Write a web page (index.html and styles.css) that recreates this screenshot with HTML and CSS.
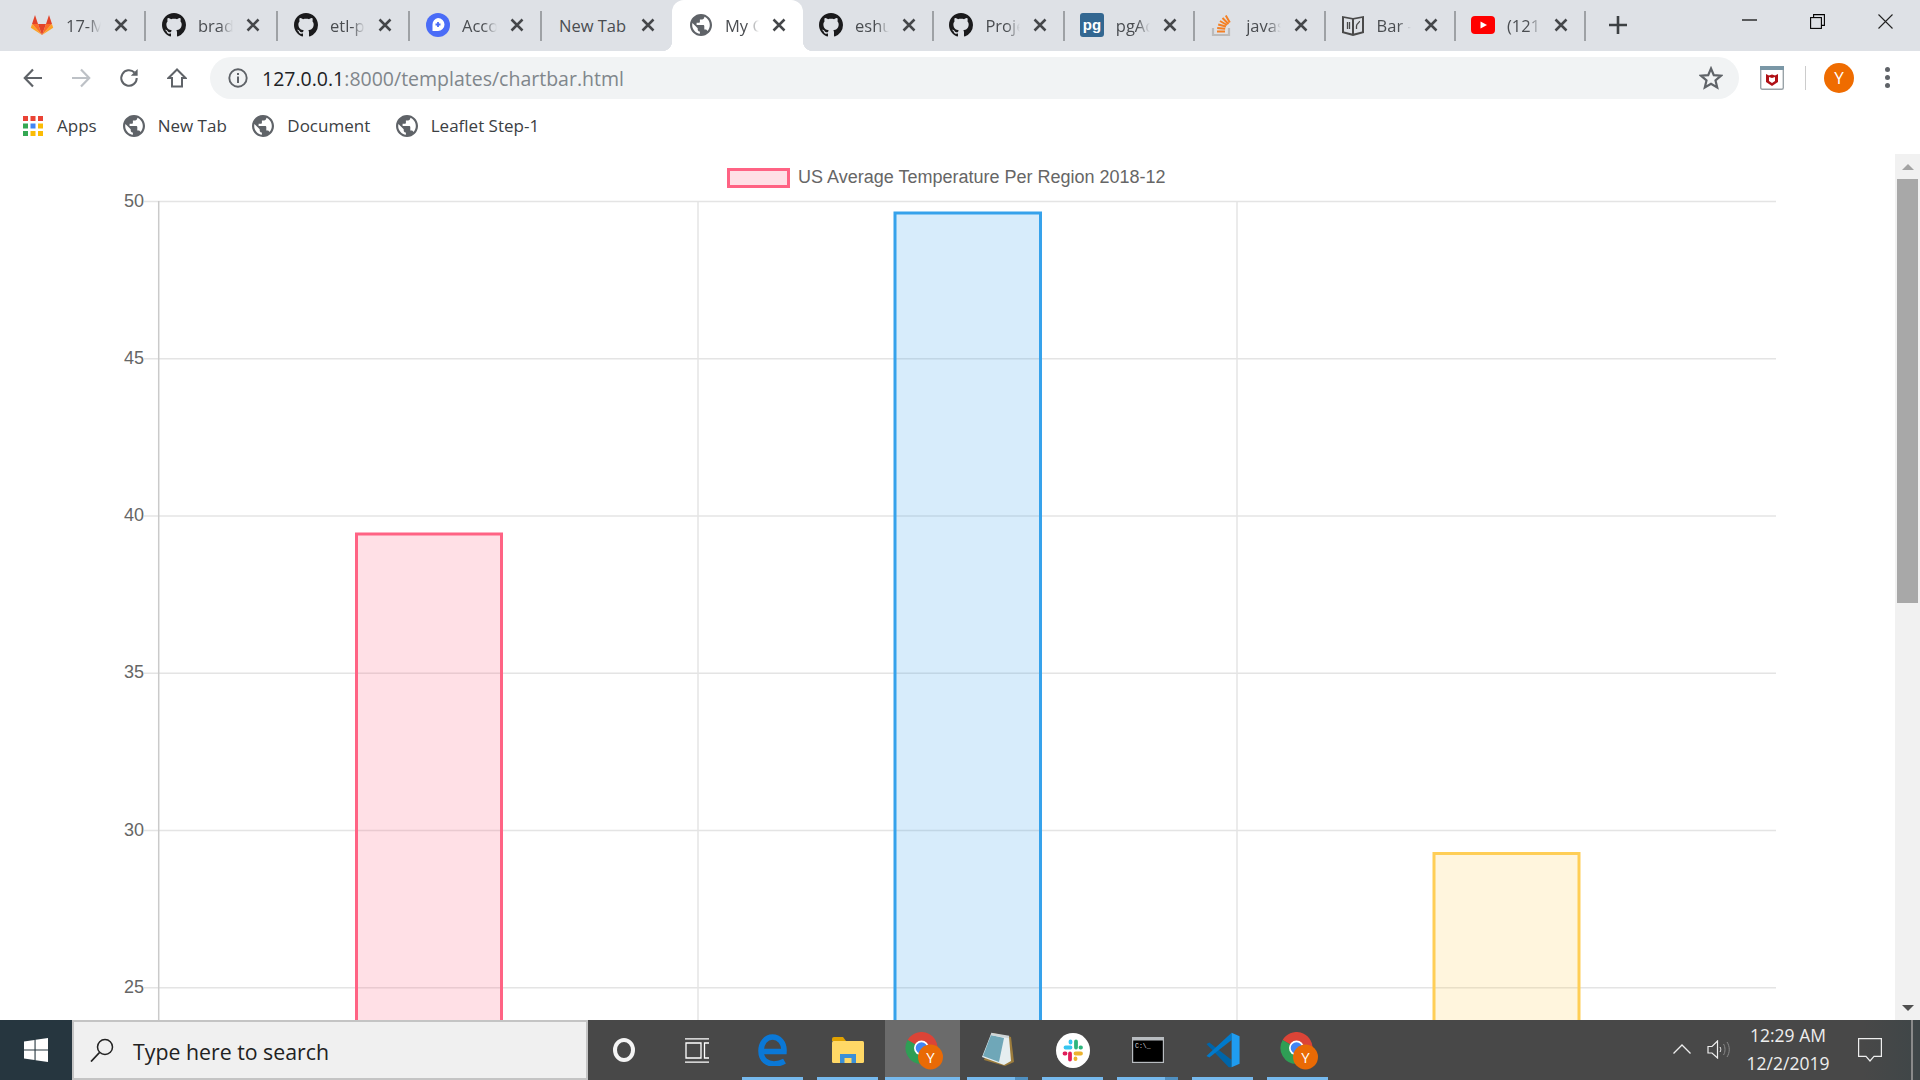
FILE: index.html
```html
<!DOCTYPE html>
<html lang="en">
<head>
    <meta charset="UTF-8">
    <meta name="viewport" content="width=device-width, initial-scale=1.0">
    <title>My Chart</title>
    <link rel="stylesheet" href="styles.css">
</head>
<body>
    <!-- shared icons -->
    <svg class="sprite" xmlns="http://www.w3.org/2000/svg">
        <symbol id="i-globe" viewBox="2 2 20 20">
            <path d="M12 2C6.48 2 2 6.48 2 12s4.48 10 10 10 10-4.48 10-10S17.52 2 12 2zm-1 17.93c-3.95-.49-7-3.85-7-7.93 0-.62.08-1.21.21-1.79L9 15v1c0 1.1.9 2 2 2v1.93zm6.9-2.54c-.26-.81-1-1.39-1.9-1.39h-1v-3c0-.55-.45-1-1-1H8v-2h2c.55 0 1-.45 1-1V7h2c1.1 0 2-.9 2-2v-.41c2.93 1.19 5 4.06 5 7.41 0 2.08-.8 3.97-2.1 5.39z" fill="#5f6368"/>
        </symbol>
        <symbol id="i-github" viewBox="0 0 16 16">
            <path d="M8 0C3.58 0 0 3.58 0 8c0 3.54 2.29 6.53 5.47 7.59.4.07.55-.17.55-.38 0-.19-.01-.82-.01-1.49-2.01.37-2.53-.49-2.69-.94-.09-.23-.48-.94-.82-1.13-.28-.15-.68-.52-.01-.53.63-.01 1.08.58 1.23.82.72 1.21 1.87.87 2.33.66.07-.52.28-.87.51-1.07-1.78-.2-3.64-.89-3.64-3.95 0-.87.31-1.59.82-2.15-.08-.2-.36-1.02.08-2.12 0 0 .67-.21 2.2.82.64-.18 1.32-.27 2-.27.68 0 1.36.09 2 .27 1.53-1.04 2.2-.82 2.2-.82.44 1.1.16 1.92.08 2.12.51.56.82 1.27.82 2.15 0 3.07-1.87 3.75-3.65 3.95.29.25.54.73.54 1.48 0 1.07-.01 1.93-.01 2.2 0 .21.15.46.55.38A8.013 8.013 0 0016 8c0-4.42-3.58-8-8-8z" fill="#1a1a1c"/>
        </symbol>
        <symbol id="i-close" viewBox="0 0 14 14">
            <path d="M1.5 1.5l11 11M12.500 1.500l-11 11" stroke="#45474a" stroke-width="2.500" fill="none"/>
        </symbol>
        <symbol id="i-chrome" viewBox="0 0 38 38">
            <path d="M16.500 16L2.640 8A16 16 0 0 1 32.500 16Z" fill="#db4437"/>
            <path d="M16.500 16H32.500A16 16 0 0 1 16.500 32Z" fill="#f4c20d"/>
            <path d="M16.500 16V32A16 16 0 0 1 2.640 8Z" fill="#2f9e55"/>
            <circle cx="16.500" cy="16" r="7.500" fill="#fff"/>
            <circle cx="16.500" cy="16" r="5.800" fill="#4285f4"/>
            <circle cx="25.500" cy="25" r="12.500" fill="#e96a05"/>
            <text x="25.500" y="30.500" class="badge-letter">Y</text>
        </symbol>
    </svg>

    <div class="window">
        <div class="tabstrip">
            <div class="tabs">
                <div class="tab tab-wide">
                    <svg class="favicon" viewBox="0 0 24 24"><polygon points="12,22 8,11 2,11" fill="#fc6d26"/><polygon points="12,22 16,11 22,11" fill="#fc6d26"/><polygon points="8,11 5,2 2,11" fill="#e24329"/><polygon points="16,11 19,2 22,11" fill="#e24329"/><polygon points="2,11 .8,14.800 12,22" fill="#fca326"/><polygon points="22,11 23.200,14.800 12,22" fill="#fca326"/><polygon points="12,22 8,11 16,11" fill="#e24329"/></svg>
                    <span class="tab-title">17-M</span>
                    <svg class="tab-close"><use href="#i-close"/></svg>
                </div>
                <div class="tab tab-wide">
                    <svg class="favicon"><use href="#i-github"/></svg>
                    <span class="tab-title">brad</span>
                    <svg class="tab-close"><use href="#i-close"/></svg>
                </div>
                <div class="tab tab-wide">
                    <svg class="favicon"><use href="#i-github"/></svg>
                    <span class="tab-title">etl-p</span>
                    <svg class="tab-close"><use href="#i-close"/></svg>
                </div>
                <div class="tab tab-wide">
                    <svg class="favicon" viewBox="0 0 24 24"><circle cx="12" cy="12" r="12" fill="#4a6cf7"/><path d="M12 5a6.500 6.500 0 0 1 0 13H6.500v-6.500A6.500 6.500 0 0 1 12 5z" fill="#fff"/><path d="M12 9v5M9.500 11.500h5" stroke="#4a6cf7" stroke-width="1.800"/></svg>
                    <span class="tab-title">Acco</span>
                    <svg class="tab-close"><use href="#i-close"/></svg>
                </div>
                <div class="tab tab-plain no-sep">
                    <span class="tab-title">New Tab</span>
                    <svg class="tab-close"><use href="#i-close"/></svg>
                </div>
                <div class="tab tab-active no-sep">
                    <svg class="favicon"><use href="#i-globe"/></svg>
                    <span class="tab-title">My C</span>
                    <svg class="tab-close"><use href="#i-close"/></svg>
                </div>
                <div class="tab">
                    <svg class="favicon"><use href="#i-github"/></svg>
                    <span class="tab-title">eshu</span>
                    <svg class="tab-close"><use href="#i-close"/></svg>
                </div>
                <div class="tab">
                    <svg class="favicon"><use href="#i-github"/></svg>
                    <span class="tab-title">Proje</span>
                    <svg class="tab-close"><use href="#i-close"/></svg>
                </div>
                <div class="tab">
                    <svg class="favicon" viewBox="0 0 24 24"><rect width="24" height="24" rx="3" fill="#336791"/><text x="12" y="16.500" class="pg-letters">pg</text></svg>
                    <span class="tab-title">pgAd</span>
                    <svg class="tab-close"><use href="#i-close"/></svg>
                </div>
                <div class="tab">
                    <svg class="favicon" viewBox="0 0 24 24"><path d="M3 15v7h16v-7" fill="none" stroke="#bcbbbb" stroke-width="2.200"/><path d="M7 18.500h8M7.200 15l8 .8M8.200 11.500l7.800 2M10 8l7 4M12.500 5l6 6M15.800 2.500l4 7" stroke="#f48024" stroke-width="2" fill="none"/></svg>
                    <span class="tab-title">javas</span>
                    <svg class="tab-close"><use href="#i-close"/></svg>
                </div>
                <div class="tab">
                    <svg class="favicon" viewBox="0 0 24 24"><path d="M1 3l11 2 11-2v17l-11 3-11-3z" fill="#4a4a4a"/><path d="M3 5l8 1.500v14L3 18.500zM21 5l-8 1.500v14l8-2z" fill="#dee1e6"/><path d="M6.500 9v7M8.500 9v7M15.500 16v-3c0-3 3.500-3 3-5" stroke="#4a4a4a" stroke-width="1.300" fill="none"/></svg>
                    <span class="tab-title">Bar -</span>
                    <svg class="tab-close"><use href="#i-close"/></svg>
                </div>
                <div class="tab">
                    <svg class="favicon" viewBox="0 0 24 24"><rect y="3" width="24" height="18" rx="4" fill="#f00"/><polygon points="9.500,8.500 16,12 9.500,15.500" fill="#fff"/></svg>
                    <span class="tab-title">(121</span>
                    <svg class="tab-close"><use href="#i-close"/></svg>
                </div>
            </div>
            <svg class="new-tab" viewBox="0 0 18 18"><path d="M9 0v18M0 9h18" stroke="#3c4043" stroke-width="2.600"/></svg>
            <div class="win-controls">
                <div class="win-btn"><svg class="win-icon win-min" viewBox="0 0 15 15"><path d="M0 1h15" stroke="#000" stroke-width="1.200"/></svg></div>
                <div class="win-btn"><svg class="win-icon" viewBox="0 0 15 15"><rect x=".6" y="3.600" width="10.800" height="10.800" fill="none" stroke="#000" stroke-width="1.100"/><path d="M3.600 3.600V.6h10.800v10.800h-3" fill="none" stroke="#000" stroke-width="1.100"/></svg></div>
                <div class="win-btn"><svg class="win-icon" viewBox="0 0 15 15"><path d="M.5.5l14 14M14.500.5l-14 14" stroke="#222" stroke-width="1.100"/></svg></div>
            </div>
        </div>

        <div class="toolbar">
            <svg class="nav-icon" viewBox="0 0 20 20"><path d="M19 10H2M10 1.500L1.800 10l8.200 8.500" fill="none" stroke="#5f6368" stroke-width="2.200"/></svg>
            <svg class="nav-icon" viewBox="0 0 20 20"><path d="M1 10h17M10 1.500l8.200 8.500-8.200 8.500" fill="none" stroke="#bdc1c6" stroke-width="2.200"/></svg>
            <svg class="nav-icon" viewBox="0 0 22 22"><path d="M19.500 11a8.500 8.500 0 1 1-2.500-6" fill="none" stroke="#5f6368" stroke-width="2.200"/><polygon points="20.500,1 20.500,8.500 13,8.500" fill="#5f6368"/></svg>
            <svg class="nav-icon" viewBox="0 0 20 20"><path d="M10 1.500L1.500 10H5v8.500h10V10h3.500z" fill="none" stroke="#5f6368" stroke-width="2"/></svg>
            <div class="omnibox">
                <svg class="omni-info" viewBox="0 0 20 20"><circle cx="10" cy="10" r="8.700" fill="none" stroke="#5f6368" stroke-width="1.900"/><path d="M10 8.500v6.500M10 5v2" stroke="#5f6368" stroke-width="2"/></svg>
                <span class="url"><span class="url-host">127.0.0.1</span>:8000/templates/chartbar.html</span>
                <svg class="omni-star" viewBox="0 0 24 24"><path d="M12 2.500l2.800 6.600 7.200.6-5.500 4.700 1.700 7-6.200-3.700-6.200 3.700 1.700-7L2 9.700l7.200-.6z" fill="none" stroke="#5f6368" stroke-width="2.200"/></svg>
            </div>
            <svg class="ext-icon" viewBox="0 0 24 24"><rect x=".7" y=".7" width="22.600" height="22.600" rx="1.500" fill="#fff" stroke="#9aa3a8" stroke-width="1.400"/><rect width="24" height="4" fill="#7a97a6"/><path d="M6 8l3 1.500 3-1 3 1L18 8v8l-6 4-6-4z" fill="#b01116"/><path d="M9 11l3 1 3-1v4l-3 2-3-2z" fill="#fff"/></svg>
            <div class="toolbar-sep"></div>
            <div class="avatar">Y</div>
            <div class="menu-dots"><i></i><i></i><i></i></div>
        </div>

        <div class="bookmarks">
            <div class="bookmark bookmark-apps">
                <svg class="apps-icon" viewBox="0 0 20 20">
                    <rect width="5" height="5" fill="#ea4335"/><rect x="7.500" width="5" height="5" fill="#ea4335"/><rect x="15" width="5" height="5" fill="#ea4335"/>
                    <rect y="7.500" width="5" height="5" fill="#34a853"/><rect x="7.500" y="7.500" width="5" height="5" fill="#4285f4"/><rect x="15" y="7.500" width="5" height="5" fill="#fbbc05"/>
                    <rect y="15" width="5" height="5" fill="#34a853"/><rect x="7.500" y="15" width="5" height="5" fill="#fbbc05"/><rect x="15" y="15" width="5" height="5" fill="#fbbc05"/>
                </svg>
                <span>Apps</span>
            </div>
            <div class="bookmark"><svg class="bookmark-globe"><use href="#i-globe"/></svg><span>New Tab</span></div>
            <div class="bookmark"><svg class="bookmark-globe"><use href="#i-globe"/></svg><span>Document</span></div>
            <div class="bookmark"><svg class="bookmark-globe"><use href="#i-globe"/></svg><span>Leaflet Step-1</span></div>
        </div>

        <div class="page">
            <svg class="chart" viewBox="0 154 1895 866">
                <g class="grid">
                    <line x1="144" y1="201.500" x2="1776" y2="201.500"/>
                    <line x1="144" y1="358.700" x2="1776" y2="358.700"/>
                    <line x1="144" y1="516" x2="1776" y2="516"/>
                    <line x1="144" y1="673.200" x2="1776" y2="673.200"/>
                    <line x1="144" y1="830.500" x2="1776" y2="830.500"/>
                    <line x1="144" y1="987.700" x2="1776" y2="987.700"/>
                    <line x1="698" y1="201" x2="698" y2="1020"/>
                    <line x1="1237" y1="201" x2="1237" y2="1020"/>
                    <line class="axis" x1="158.700" y1="201" x2="158.700" y2="1020"/>
                </g>
                <g class="ticks">
                    <text x="144" y="206.500">50</text>
                    <text x="144" y="363.700">45</text>
                    <text x="144" y="521">40</text>
                    <text x="144" y="678.200">35</text>
                    <text x="144" y="835.500">30</text>
                    <text x="144" y="992.700">25</text>
                </g>
                <rect class="bar bar-pink" x="356.500" y="534" width="145" height="520"/>
                <rect class="bar bar-blue" x="895" y="213" width="145.500" height="840"/>
                <rect class="bar bar-yellow" x="1434" y="853.500" width="145" height="200"/>
                <rect class="bar bar-pink" x="728.500" y="169.500" width="60" height="17"/>
                <text class="legend" x="798" y="182.500">US Average Temperature Per Region 2018-12</text>
            </svg>
            <div class="scrollbar">
                <div class="scroll-btn"><i class="arrow-up"></i></div>
                <div class="scroll-track"><div class="scroll-thumb"></div></div>
                <div class="scroll-btn"><i class="arrow-down"></i></div>
            </div>
        </div>

        <div class="taskbar">
            <div class="start">
                <svg class="start-logo" viewBox="0 0 24 24"><polygon points="0,3.500 10.500,2 10.500,11.400 0,11.400" fill="#fff"/><polygon points="11.600,1.800 24,0 24,11.400 11.600,11.400" fill="#fff"/><polygon points="0,12.600 10.500,12.600 10.500,22 0,20.500" fill="#fff"/><polygon points="11.600,12.600 24,12.600 24,24 11.600,22.200" fill="#fff"/></svg>
            </div>
            <div class="search">
                <svg class="search-icon" viewBox="0 0 24 24"><circle cx="15" cy="9" r="7.500" fill="none" stroke="#222" stroke-width="1.500"/><path d="M9.500 14.500L1 23.500" stroke="#222" stroke-width="1.800"/></svg>
                <span>Type here to search</span>
            </div>
            <div class="cortana"><i></i></div>
            <div class="task-btn">
                <svg class="taskview" viewBox="0 0 24 25"><path d="M0 .8h24M0 24.200h24M1 5h15v15H1zM24 5h-4.500v15H24" fill="none" stroke="#fff" stroke-width="1.300"/></svg>
            </div>
            <div class="task-btn has-app">
                <svg class="app-edge" viewBox="0 0 30 32"><path d="M5 17.500H26C26.500 9 21 3 14.500 3 8 3 3 9 3 17c0 9 6.500 13 13 13 4 0 7.500-1 10.500-2.800" fill="none" stroke="#0a78d7" stroke-width="5.500"/></svg>
            </div>
            <div class="task-btn has-app">
                <svg class="app-folder" viewBox="0 0 32 26"><path d="M0 2a2 2 0 0 1 2-2h9l3 4h-14z" fill="#e0a100"/><rect y="4" width="32" height="22" rx="1.500" fill="#ffd866"/><path d="M8 26V17h16v9h-4.500v-5h-7v5z" fill="#3a8fd8"/></svg>
            </div>
            <div class="task-btn task-active has-app">
                <svg class="app-chrome"><use href="#i-chrome"/></svg>
            </div>
            <div class="task-btn has-app has-stack">
                <svg class="app-notepad" viewBox="0 0 32 36"><polygon points="11,1 29,5 32,30 23,34 2,28" fill="#9c7c3c"/><polygon points="9,2 27,5 29,29 22,33 0,25" fill="#e6eef0"/><polygon points="9,3 22,6 17,30 1,24" fill="#6fa7b8"/><path d="M9 2l18 3" stroke="#cfd6d8" stroke-width="2.500"/></svg>
            </div>
            <div class="task-btn has-app">
                <svg class="app-slack" viewBox="0 0 34 35">
                    <ellipse cx="17" cy="17.500" rx="17" ry="17.500" fill="#fff"/>
                    <g fill="none" stroke-width="3.800" stroke-linecap="round">
                        <path d="M9.500 14.500h5M14.500 8.500v1" stroke="#36c5f0"/>
                        <path d="M20 8.500v6M25 14.500h-.5" stroke="#2eb67d"/>
                        <path d="M19.500 20.500h5.500M19.500 26v-.5" stroke="#ecb22e"/>
                        <path d="M14 20.500v6M8.500 20.500h1" stroke="#e01e5a"/>
                    </g>
                </svg>
            </div>
            <div class="task-btn has-app has-stack">
                <svg class="app-cmd" viewBox="0 0 32 26"><rect width="32" height="26" fill="#b8bcc0"/><rect x="1.200" y="3.500" width="29.600" height="21.300" fill="#000"/><text x="3" y="10.500" class="cmd-prompt">C:\_</text></svg>
            </div>
            <div class="task-btn has-app">
                <svg class="app-code" viewBox="0 0 100 100"><polygon points="4,33 12,29 74,78 74,98 66,98" fill="#0065a9"/><polygon points="74,2 74,22 12,71 4,67" fill="#007acc"/><polygon points="74,2 96,12 96,88 74,98" fill="#1f9cf0"/></svg>
            </div>
            <div class="task-btn has-app">
                <svg class="app-chrome"><use href="#i-chrome"/></svg>
            </div>
            <div class="tray">
                <svg class="tray-chevron" viewBox="0 0 18 10"><path d="M.5 9.500L9 1l8.500 8.500" fill="none" stroke="#eee" stroke-width="1.300"/></svg>
                <svg class="tray-sound" viewBox="0 0 23 19"><path d="M1 6.500h4L10.500 1v17L5 13H1z" fill="none" stroke="#eee" stroke-width="1.200"/><path d="M13 7c1 1.500 1 3.500 0 5" fill="none" stroke="#eee"/><path d="M16.500 4c2 3 2 8 0 11M20 2c3 4.500 3 10.500 0 15" fill="none" stroke="#888"/></svg>
                <div class="clock"><span>12:29 AM</span><span>12/2/2019</span></div>
                <svg class="tray-notify" viewBox="0 0 24 24"><path d="M.6.6h22.800v17.800H16L12 23l-4-4.600H.6z" fill="none" stroke="#eee" stroke-width="1.200"/></svg>
                <div class="show-desktop"></div>
            </div>
        </div>
    </div>
</body>
</html>
```

FILE: styles.css
```css
html, body {
    margin: 0;
    height: 100%;
    overflow: hidden;
}
body {
    font-family: "Open Sans", "Noto Sans", sans-serif;
    background: #fff;
}
.sprite {
    display: none;
}
.window {
    display: flex;
    flex-direction: column;
    height: 1080px;
}

/* tab strip */
.tabstrip {
    display: flex;
    height: 51px;
    background: #dee1e6;
    flex-shrink: 0;
}
.tabs {
    display: flex;
    padding-left: 13px;
}
.tab {
    position: relative;
    display: flex;
    align-items: center;
    box-sizing: border-box;
    width: 130.4px;
    padding: 0 17px 1px 16px;
}
.tab-wide {
    width: 132px;
    padding-left: 17px;
}
.tab-plain,
.tab-active {
    width: 131px;
}
.tab::after {
    content: "";
    position: absolute;
    right: -1px;
    top: 11px;
    width: 2px;
    height: 30px;
    background: #9ea1a5;
}
.no-sep::after {
    display: none;
}
.tab-active {
    background: #fff;
    border-radius: 12px 12px 0 0;
}
.tab-active::before,
.tab-active::after {
    content: "";
    display: block;
    position: absolute;
    top: auto;
    bottom: 0;
    width: 10px;
    height: 10px;
}
.tab-active::before {
    left: -10px;
    background: radial-gradient(circle at 0 0, #dee1e6 10px, #fff 10.5px);
}
.tab-active::after {
    right: -10px;
    background: radial-gradient(circle at 100% 0, #dee1e6 10px, #fff 10.5px);
}
.favicon {
    width: 24px;
    height: 24px;
    flex-shrink: 0;
    margin-right: 12px;
}
.tab-active .favicon {
    width: 22px;
    height: 22px;
    margin: 0 13px 0 2px;
}
.tab-title {
    flex: 1;
    min-width: 0;
    overflow: hidden;
    white-space: nowrap;
    font-size: 16.5px;
    color: #4a4d51;
    -webkit-mask-image: linear-gradient(to right, #000 62%, transparent 100%);
    mask-image: linear-gradient(to right, #000 62%, transparent 100%);
}
.tab-plain .tab-title {
    -webkit-mask-image: none;
    mask-image: none;
    padding-left: 2px;
}
.tab-close {
    width: 14px;
    height: 14px;
    flex-shrink: 0;
    margin-left: 13px;
}
.new-tab {
    width: 18px;
    height: 18px;
    margin: 16px 0 0 24px;
}
.win-controls {
    display: flex;
    margin-left: auto;
    padding-right: 1px;
}
.win-btn {
    width: 68px;
    display: flex;
    justify-content: center;
    padding-top: 14px;
    box-sizing: border-box;
}
.win-icon {
    width: 15px;
    height: 15px;
}
.win-min {
    margin-top: 5px;
}

/* toolbar */
.toolbar {
    display: flex;
    align-items: center;
    height: 52px;
    padding: 1px 23px 0 23px;
    flex-shrink: 0;
    box-sizing: border-box;
}
.nav-icon {
    width: 20px;
    height: 20px;
    margin-right: 28px;
    flex-shrink: 0;
}
.omnibox {
    display: flex;
    align-items: center;
    box-sizing: border-box;
    width: 1529px;
    height: 42px;
    margin-left: -5px;
    padding: 0 16px 0 18px;
    background: #f1f3f4;
    border-radius: 21px;
    flex-shrink: 0;
}
.omni-info {
    width: 20px;
    height: 20px;
    margin-right: 14px;
}
.url {
    padding-top: 1px;
    font-size: 19.5px;
    color: #80868b;
}
.url-host {
    color: #202124;
}
.omni-star {
    width: 24px;
    height: 24px;
    margin-left: auto;
}
.ext-icon {
    width: 24px;
    height: 24px;
    margin-left: 21px;
    flex-shrink: 0;
}
.toolbar-sep {
    width: 1px;
    height: 24px;
    margin: 0 18px 0 21px;
    background: #ccc;
    flex-shrink: 0;
}
.avatar {
    width: 30px;
    height: 30px;
    border-radius: 50%;
    background: #ef6c00;
    color: #fff;
    font-size: 17px;
    line-height: 30px;
    text-align: center;
    flex-shrink: 0;
}
.menu-dots {
    display: flex;
    flex-direction: column;
    gap: 3px;
    margin-left: 31px;
}
.menu-dots i {
    width: 5px;
    height: 5px;
    border-radius: 50%;
    background: #5f6368;
}

/* bookmarks */
.bookmarks {
    display: flex;
    align-items: center;
    height: 51px;
    padding: 0 0 6px 23px;
    box-sizing: border-box;
    flex-shrink: 0;
}
.bookmark {
    display: flex;
    align-items: center;
    margin-right: 25.5px;
    font-size: 17px;
    color: #3c4043;
}
.bookmark-apps {
    margin-right: 26px;
}
.apps-icon {
    width: 20px;
    height: 20px;
    margin-right: 14px;
}
.bookmark-globe {
    width: 22px;
    height: 22px;
    margin-right: 13px;
}

/* chart page */
.page {
    display: flex;
    flex: 1;
    min-height: 0;
    overflow: hidden;
}
.chart {
    display: block;
    width: 1895px;
    height: 866px;
    flex-shrink: 0;
}
.grid line {
    stroke: #e4e4e4;
    stroke-width: 1.500;
}
.grid .axis {
    stroke: #cacaca;
}
.ticks text {
    font: 18px "Liberation Sans", Arial, sans-serif;
    fill: #666;
    text-anchor: end;
}
.legend {
    font: 18px "Liberation Sans", Arial, sans-serif;
    fill: #666;
}
.bar {
    stroke-width: 3;
}
.bar-pink {
    fill: rgba(255, 99, 132, 0.2);
    stroke: #ff6384;
}
.bar-blue {
    fill: rgba(54, 162, 235, 0.2);
    stroke: #36a2eb;
}
.bar-yellow {
    fill: rgba(255, 206, 86, 0.2);
    stroke: #ffce56;
}
.scrollbar {
    display: flex;
    flex-direction: column;
    width: 25px;
    background: #f1f1f1;
}
.scroll-btn {
    display: flex;
    align-items: center;
    justify-content: center;
    height: 25px;
    flex-shrink: 0;
}
.arrow-up,
.arrow-down {
    width: 0;
    height: 0;
    border-left: 6px solid transparent;
    border-right: 6px solid transparent;
}
.arrow-up {
    border-bottom: 6px solid #a3a3a3;
}
.arrow-down {
    border-top: 6px solid #505050;
}
.scroll-track {
    flex: 1;
    padding: 0 2px;
}
.scroll-thumb {
    height: 424px;
    background: #a8a8a8;
}

/* taskbar */
.taskbar {
    display: flex;
    align-items: stretch;
    height: 60px;
    flex-shrink: 0;
    background: linear-gradient(to right, #484848 97%, #3f4648);
    color: #eee;
}
.start {
    display: flex;
    align-items: center;
    justify-content: center;
    width: 72px;
    background: #26363f;
    flex-shrink: 0;
}
.start-logo {
    width: 24px;
    height: 24px;
}
.search {
    display: flex;
    align-items: center;
    box-sizing: border-box;
    width: 516px;
    padding: 2px 0 0 16px;
    background: #f0f0f0;
    border: 2px solid #c4c4c4;
    font-size: 21.3px;
    color: #222;
    flex-shrink: 0;
}
.search-icon {
    width: 24px;
    height: 24px;
    margin: -2px 19px 0 0;
}
.cortana {
    display: flex;
    align-items: center;
    justify-content: center;
    width: 72px;
    flex-shrink: 0;
}
.cortana i {
    box-sizing: border-box;
    width: 22px;
    height: 24px;
    border: 4px solid #f4f4f4;
    border-radius: 50%;
}
.task-btn {
    position: relative;
    display: flex;
    align-items: center;
    justify-content: center;
    width: 75px;
    flex-shrink: 0;
}
.taskview {
    width: 24px;
    height: 25px;
    margin-left: -2px;
}
.has-app::after {
    content: "";
    position: absolute;
    left: 7px;
    right: 7px;
    bottom: 0;
    height: 3px;
    background: #76b9ed;
}
.has-stack::before {
    content: "";
    position: absolute;
    right: 7px;
    bottom: 0;
    width: 13px;
    height: 3px;
    background: #4f8fc0;
    z-index: 1;
}
.task-active {
    background: #6b6b6b;
}
.task-active::after {
    left: 0;
    right: 0;
}
.app-edge {
    width: 30px;
    height: 32px;
}
.app-folder {
    width: 32px;
    height: 26px;
}
.app-chrome {
    width: 38px;
    height: 38px;
    margin: 2px 0 0 2px;
}
.badge-letter {
    font: 15px "Open Sans", sans-serif;
    fill: #fff;
    text-anchor: middle;
}
.pg-letters {
    font: bold 15px "Liberation Sans", sans-serif;
    fill: #fff;
    text-anchor: middle;
}
.cmd-prompt {
    font: 6.500px "Liberation Mono", monospace;
    fill: #ddd;
}
.app-notepad {
    width: 32px;
    height: 36px;
}
.app-slack {
    width: 34px;
    height: 35px;
}
.app-cmd {
    width: 32px;
    height: 26px;
}
.app-code {
    width: 36px;
    height: 36px;
}
.tray {
    display: flex;
    align-items: center;
    margin-left: auto;
}
.tray-chevron {
    width: 18px;
    height: 10px;
    margin: -2px 16px 0 0;
}
.tray-sound {
    width: 23px;
    height: 19px;
    margin: -1px 16px 0 0;
}
.clock {
    display: flex;
    flex-direction: column;
    align-items: center;
    gap: 5px;
    width: 84px;
    font-size: 17.5px;
    line-height: 23px;
    margin-top: -2px;
}
.tray-notify {
    width: 24px;
    height: 24px;
    margin: 0 29px 0 28px;
}
.show-desktop {
    width: 2px;
    height: 60px;
    margin-right: 7px;
    background: #8a8a8a;
}
```
